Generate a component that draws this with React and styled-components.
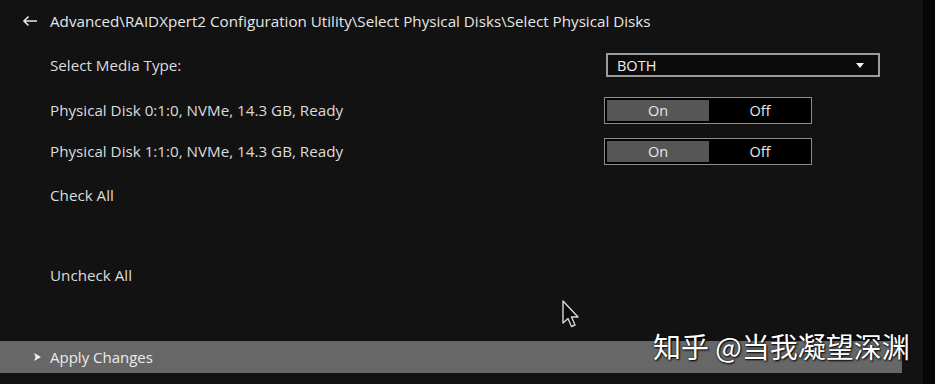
import styled, { createGlobalStyle } from "styled-components";

const GlobalStyle = createGlobalStyle`
  html, body {
    margin: 0;
    padding: 0;
    background: #121212;
  }
  body {
    font-family: "Open Sans", "Noto Sans", sans-serif;
    color: #e2e2e2;
  }
`;

const Screen = styled.div`
  position: relative;
  width: 935px;
  height: 384px;
  display: flex;
  overflow: hidden;
`;

const Panel = styled.div`
  width: 923px;
  background: #121212;
  display: flex;
  flex-direction: column;
`;

const Edge = styled.div`
  flex: 1;
  background: #070707;
`;

const Header = styled.div`
  height: 42px;
  display: flex;
  align-items: center;
  padding-left: 22px;
  gap: 12px;
  font-size: 15.2px;
  color: #e6e6e6;
`;

const Row = styled.div`
  height: ${(p) => p.h}px;
  display: grid;
  grid-template-columns: 554px auto;
  align-items: center;
  padding-left: 50px;
  font-size: 15.2px;
  color: #dcdcdc;
`;

const Spacer = styled.div`
  height: ${(p) => p.h}px;
`;

const Select = styled.div`
  width: 247px;
  height: 20px;
  border: 2px solid #9c9c9c;
  background: #0b0b0b;
  display: flex;
  align-items: center;
  justify-content: space-between;
  padding: 0 14px 0 9px;
  margin-left: 2px;
  font-size: 14.5px;
  color: #f0f0f0;
`;

const Caret = styled.span`
  width: 0;
  height: 0;
  border-left: 4.5px solid transparent;
  border-right: 4.5px solid transparent;
  border-top: 5px solid #f2f2f2;
`;

const Toggle = styled.div`
  width: 208px;
  height: 27px;
  border: 1px solid #8c8c8c;
  background: #000;
  display: flex;
  padding: 2px 0 0 2px;
  box-sizing: border-box;
`;

const Seg = styled.div`
  width: 102px;
  height: 21px;
  display: flex;
  align-items: center;
  justify-content: center;
  font-size: 14.5px;
  color: #e8e8e8;
  background: ${(p) => (p.active ? "#565656" : "transparent")};
`;

const ApplyBar = styled.div`
  margin-top: auto;
  margin-bottom: 11px;
  width: 902px;
  height: 32px;
  background: #676767;
  display: flex;
  align-items: center;
  gap: 9px;
  padding-left: 34px;
  box-sizing: border-box;
  font-size: 15px;
  color: #ececec;
`;

const Watermark = styled.div`
  position: absolute;
  left: 653px;
  top: 326px;
  font-family: "Noto Sans CJK SC", "Noto Sans", sans-serif;
  font-size: 28px;
  color: #ffffff;
  white-space: nowrap;
  text-shadow: 1px 1px 2px #000, 0 0 2px rgba(0, 0, 0, 0.7);
`;

const Cursor = styled.svg`
  position: absolute;
  left: 561px;
  top: 299px;
`;

const BackArrow = () => (
  <svg width="16" height="12" viewBox="0 0 16 12">
    <path d="M15 6H2M6.5 1.5L2 6l4.5 4.5" fill="none" stroke="#e6e6e6" strokeWidth="1.6" />
  </svg>
);

const Chevron = () => (
  <svg width="7" height="8" viewBox="0 0 7 8">
    <path d="M0 0L7 4L0 8L1.6 4Z" fill="#f0f0f0" />
  </svg>
);

const OnOff = () => (
  <Toggle>
    <Seg active>On</Seg>
    <Seg>Off</Seg>
  </Toggle>
);

export default function App() {
  return (
    <>
      <GlobalStyle />
      <Screen>
        <Panel>
          <Header>
            <BackArrow />
            <span>Advanced\RAIDXpert2 Configuration Utility\Select Physical Disks\Select Physical Disks</span>
          </Header>
          <Row h={46}>
            <span>Select Media Type:</span>
            <Select>
              <span>BOTH</span>
              <Caret />
            </Select>
          </Row>
          <Row h={44}>
            <span>Physical Disk 0:1:0, NVMe, 14.3 GB, Ready</span>
            <OnOff />
          </Row>
          <Row h={38}>
            <span>Physical Disk 1:1:0, NVMe, 14.3 GB, Ready</span>
            <OnOff />
          </Row>
          <Row h={50}>
            <span>Check All</span>
          </Row>
          <Spacer h={35} />
          <Row h={40}>
            <span>Uncheck All</span>
          </Row>
          <ApplyBar>
            <Chevron />
            <span>Apply Changes</span>
          </ApplyBar>
        </Panel>
        <Edge />
        <Cursor width="20" height="30" viewBox="0 0 20 30">
          <path
            d="M2 2V24L7 19.5L10.5 27.5L14 26L10.5 18H17Z"
            fill="#0a0a0a"
            stroke="#d8d8d8"
            strokeWidth="1.4"
            strokeLinejoin="round"
          />
        </Cursor>
        <Watermark>知乎 @当我凝望深渊</Watermark>
      </Screen>
    </>
  );
}
